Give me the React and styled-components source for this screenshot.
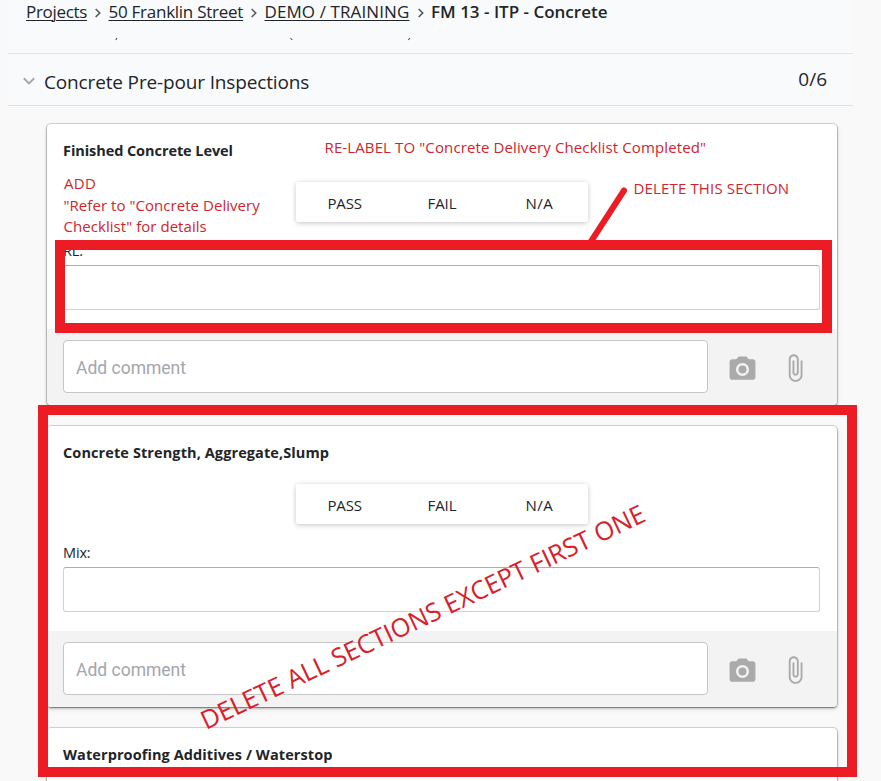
import React from "react";
import styled, { createGlobalStyle } from "styled-components";

const GlobalStyle = createGlobalStyle`
  *, *::before, *::after { box-sizing: border-box; }
  html, body { margin: 0; padding: 0; overflow: hidden; }
  body {
    background: #f9f9f9;
    color: #212529;
    font-family: "Open Sans", "Noto Sans", sans-serif;
  }
`;

const RED = "#ed1c24";

const Page = styled.main`
  position: relative;
  width: 881px;
  height: 781px;
  padding-left: 8px;
  overflow: hidden;
`;

const Header = styled.header`
  width: 845px;
  height: 54px;
  background: #f9fafc;
  border-bottom: 1px solid #e1e4e9;
`;

const Breadcrumb = styled.nav`
  display: flex;
  align-items: center;
  height: 36px;
  padding: 0 0 12px 18px;
  font-size: 17px;
  line-height: 24px;
  white-space: nowrap;
`;

const Crumb = styled.a`
  flex: none;
  width: ${(p) => p.$width}px;
  letter-spacing: ${(p) => p.$tracking}px;
  color: #212529;
  text-decoration: underline;
  text-decoration-thickness: 1px;
  text-underline-offset: 2px;
`;

const CurrentCrumb = styled.span`
  font-weight: 600;
`;

const CrumbArrow = styled.svg`
  flex: none;
  width: 21.5px;
  height: 12px;
  margin-top: 1px;
  fill: none;
  stroke: #555a5f;
  stroke-width: 1.6;
`;

const ClippedLine = styled.svg`
  display: block;
  width: 845px;
  height: 6px;
  fill: none;
  stroke: #4a4d50;
  stroke-width: 1.1;
`;

const SectionBar = styled.section`
  display: flex;
  justify-content: space-between;
  width: 845px;
  height: 52px;
  padding: 0 26px 0 15px;
  background: #f9fafc;
  border-bottom: 1px solid #e1e4e9;
  font-size: 19px;
  line-height: 28px;
`;

const SectionTitle = styled.h2`
  display: flex;
  align-items: center;
  gap: 9px;
  height: 28px;
  margin: 14px 0 0;
  font-size: 19px;
  font-weight: 400;
  letter-spacing: -0.15px;
`;

const ExpandIcon = styled.svg`
  width: 12px;
  height: 8px;
  margin-top: -3px;
  fill: none;
  stroke: #a4a7aa;
  stroke-width: 1.9;
`;

const Count = styled.span`
  margin-top: 11px;
`;

const CardList = styled.div`
  display: flex;
  flex-direction: column;
  gap: 21px;
  width: 790px;
  margin: 18px 0 0 39px;
`;

const Card = styled.article`
  flex: none;
  height: 281px;
  background: #fff;
  border-radius: 4px;
  overflow: hidden;
  box-shadow: 0 0 0 1px rgba(0, 0, 0, 0.13), 0 1px 2px rgba(0, 0, 0, 0.45), 0 2px 5px rgba(0, 0, 0, 0.12);
`;

const CardBody = styled.div`
  display: flex;
  flex-direction: column;
  height: 205px;
  padding: 17px 16px 0;
`;

const CardTitle = styled.h3`
  margin: 0;
  font-size: 14.5px;
  font-weight: 700;
  line-height: 20px;
  letter-spacing: ${(p) => p.$tracking}px;
  white-space: nowrap;
`;

const Choices = styled.div`
  display: flex;
  align-self: center;
  width: 292px;
  height: 40px;
  margin: 21px 0 19px;
  border-radius: 3px;
  box-shadow: 0 1px 5px rgba(0, 0, 0, 0.24);
`;

const Choice = styled.button`
  flex: 1;
  padding: 2px 0 0;
  border: 0;
  border-radius: 3px;
  background: #fff;
  color: #212529;
  font: 400 15px/20px "Open Sans", "Noto Sans", sans-serif;
  letter-spacing: ${(p) => p.$tracking}px;
`;

const FieldLabel = styled.label`
  font-size: 14.5px;
  line-height: 20px;
  letter-spacing: -0.15px;
`;

const Field = styled.input`
  width: 757px;
  height: 45px;
  margin-top: 4px;
  border: 1px solid #d2d2d2;
  border-top-color: #aeaeae;
  border-radius: 3px;
  background: #fff;
`;

const CardFooter = styled.footer`
  display: flex;
  align-items: flex-start;
  height: 76px;
  padding: 11px 16px 0;
  background: #f3f3f3;
`;

const Comment = styled.input`
  width: 645px;
  height: 53px;
  padding: 2px 12px 0;
  border: 1px solid #c6c6c6;
  border-radius: 4px;
  background: #fff;
  font: 400 17.5px "Roboto", sans-serif;
  &::placeholder { color: #a3a6ad; opacity: 1; }
`;

const FooterIcon = styled.svg`
  flex: none;
  width: ${(p) => p.$size}px;
  height: ${(p) => p.$size}px;
  margin: ${(p) => p.$top}px 0 0 ${(p) => p.$left}px;
  fill: #aaa;
`;

/* Review marks that lie over the form */
const Frame = styled.div`
  position: absolute;
  left: ${(p) => p.$x}px;
  top: ${(p) => p.$y}px;
  width: ${(p) => p.$w}px;
  height: ${(p) => p.$h}px;
  border: 10px solid ${RED};
  pointer-events: none;
`;

const Note = styled.p`
  position: absolute;
  left: ${(p) => p.$x}px;
  top: ${(p) => p.$y}px;
  margin: 0;
  color: #d0252e;
  font-size: 15px;
  line-height: 21.5px;
  letter-spacing: ${(p) => p.$tracking}px;
  white-space: pre;
`;

const SlantedNote = styled(Note)`
  color: #d9202a;
  font-size: 25.5px;
  line-height: 36px;
  transform-origin: 0 28px;
  transform: rotate(-25.4deg);
`;

const Pointer = styled.svg`
  position: absolute;
  left: 580px;
  top: 180px;
  width: 56px;
  height: 66px;
  stroke: ${RED};
  stroke-width: 6;
  stroke-linecap: round;
`;

const choices = [
  { label: "PASS", tracking: -0.1 },
  { label: "FAIL", tracking: -0.1 },
  { label: "N/A", tracking: 0.5 },
];

const items = [
  { title: "Finished Concrete Level", tracking: -0.07, field: "RL:" },
  { title: "Concrete Strength, Aggregate,Slump", tracking: 0.1, field: "Mix:" },
  { title: "Waterproofing Additives / Waterstop", tracking: 0.09, field: "Type:" },
];

function Arrow() {
  return (
    <CrumbArrow viewBox="0 0 21.5 12">
      <path d="M8.7 2l4 4-4 4" />
    </CrumbArrow>
  );
}

function InspectionCard({ item }) {
  return (
    <Card>
      <CardBody>
        <CardTitle $tracking={item.tracking}>{item.title}</CardTitle>
        <Choices>
          {choices.map((c) => (
            <Choice key={c.label} type="button" $tracking={c.tracking}>{c.label}</Choice>
          ))}
        </Choices>
        <FieldLabel>{item.field}</FieldLabel>
        <Field aria-label={item.field} />
      </CardBody>
      <CardFooter>
        <Comment placeholder="Add comment" />
        <FooterIcon viewBox="0 0 24 24" $size={31} $top={13.5} $left={19}>
          <circle cx="12" cy="12" r="3.1" />
          <path d="M9 2L7.17 4H4c-1.1 0-2 .9-2 2v12c0 1.1.9 2 2 2h16c1.1 0 2-.9 2-2V6c0-1.1-.9-2-2-2h-3.17L15 2H9zm3 15c-2.76 0-5-2.24-5-5s2.24-5 5-5 5 2.24 5 5-2.24 5-5 5z" />
        </FooterIcon>
        <FooterIcon viewBox="0 0 24 24" $size={30} $top={12.5} $left={22}>
          <path d="M16.5 6v11.5c0 2.21-1.79 4-4 4s-4-1.79-4-4V5c0-1.38 1.12-2.5 2.5-2.5s2.5 1.12 2.5 2.5v10.5c0 .55-.45 1-1 1s-1-.45-1-1V6H10v9.5c0 1.38 1.12 2.5 2.5 2.5s2.5-1.12 2.5-2.5V5c0-2.21-1.79-4-4-4S7 2.79 7 5v12.5c0 3.04 2.46 5.5 5.5 5.5s5.5-2.46 5.5-5.5V6h-1.5z" />
        </FooterIcon>
      </CardFooter>
    </Card>
  );
}

export default function App() {
  return (
    <>
      <GlobalStyle />
      <Page>
        <Header>
          <Breadcrumb>
            <Crumb $width={61} $tracking={-0.32}>Projects</Crumb>
            <Arrow />
            <Crumb $width={134.5} $tracking={-0.26}>50 Franklin Street</Crumb>
            <Arrow />
            <Crumb $width={145} $tracking={0.1}>DEMO / TRAINING</Crumb>
            <Arrow />
            <CurrentCrumb>FM 13 - ITP - Concrete</CurrentCrumb>
          </Breadcrumb>
          <ClippedLine viewBox="0 0 845 6">
            <path d="M109 2l-1.2 2M282.5 2l1.8 2M402 2l-1.8 2" />
          </ClippedLine>
        </Header>
        <SectionBar>
          <SectionTitle>
            <ExpandIcon viewBox="0 0 12 8"><path d="M.8 1.3L6 6.4l5.2-5.1" /></ExpandIcon>
            Concrete Pre-pour Inspections
          </SectionTitle>
          <Count>0/6</Count>
        </SectionBar>
        <CardList>
          {items.map((item) => <InspectionCard key={item.title} item={item} />)}
        </CardList>

        <Note $x={64} $y={173} $tracking={0.3}>ADD</Note>
        <Note $x={63.5} $y={194.5} $tracking={0.05}>{'"Refer to "Concrete Delivery\nChecklist" for details'}</Note>
        <Note $x={324.5} $y={137} $tracking={0.12}>{'RE-LABEL TO "Concrete Delivery Checklist Completed"'}</Note>
        <Note $x={633.5} $y={178} $tracking={0.15}>DELETE THIS SECTION</Note>
        <Pointer viewBox="0 0 56 66"><path d="M10 63L44 10.5" /></Pointer>
        <Frame $x={55} $y={240} $w={777} $h={93} />
        <Frame $x={38} $y={405} $w={819} $h={372} />
        <SlantedNote $x={206} $y={702} $tracking={0}>DELETE ALL SECTIONS EXCEPT FIRST ONE</SlantedNote>
      </Page>
    </>
  );
}
